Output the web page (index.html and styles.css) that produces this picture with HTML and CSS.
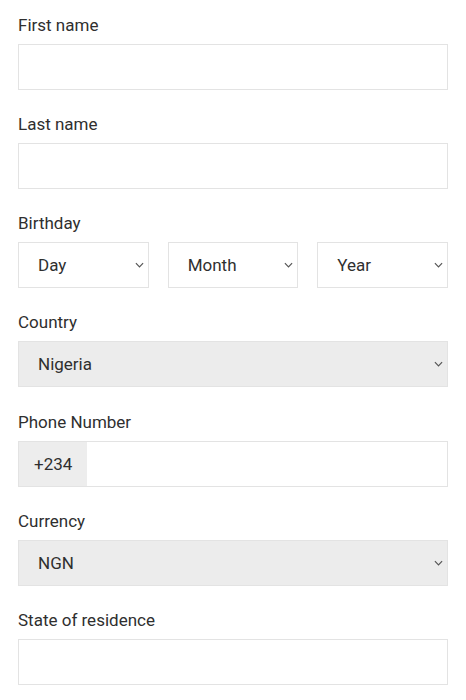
FILE: index.html
```html
<!DOCTYPE html>
<html lang="en">
<head>
    <meta charset="UTF-8">
    <meta name="viewport" content="width=device-width, initial-scale=1.0">
    <title>Register</title>
    <link rel="stylesheet" href="styles.css">
</head>
<body>

<form class="signup">
    <div class="field">
        <label for="first">First name</label>
        <input type="text" id="first" name="first">
    </div>

    <div class="field">
        <label for="last">Last name</label>
        <input type="text" id="last" name="last">
    </div>

    <div class="field">
        <label>Birthday</label>
        <div class="birthday">
            <div class="select-wrap">
                <select name="day"><option>Day</option></select>
                <svg class="chevron" viewBox="0 0 10 6"><path d="M1 1l4 4 4-4"/></svg>
            </div>
            <div class="select-wrap">
                <select name="month"><option>Month</option></select>
                <svg class="chevron" viewBox="0 0 10 6"><path d="M1 1l4 4 4-4"/></svg>
            </div>
            <div class="select-wrap">
                <select name="year"><option>Year</option></select>
                <svg class="chevron" viewBox="0 0 10 6"><path d="M1 1l4 4 4-4"/></svg>
            </div>
        </div>
    </div>

    <div class="field">
        <label for="country">Country</label>
        <div class="select-wrap locked">
            <select id="country" name="country"><option>Nigeria</option></select>
            <svg class="chevron" viewBox="0 0 10 6"><path d="M1 1l4 4 4-4"/></svg>
        </div>
    </div>

    <div class="field">
        <label for="phone">Phone Number</label>
        <div class="phone">
            <span class="prefix">+234</span>
            <input type="tel" id="phone" name="phone">
        </div>
    </div>

    <div class="field">
        <label for="currency">Currency</label>
        <div class="select-wrap locked">
            <select id="currency" name="currency"><option>NGN</option></select>
            <svg class="chevron" viewBox="0 0 10 6"><path d="M1 1l4 4 4-4"/></svg>
        </div>
    </div>

    <div class="field">
        <label for="state">State of residence</label>
        <input type="text" id="state" name="state">
    </div>
</form>

</body>
</html>
```

FILE: styles.css
```css
body {
    margin: 0;
    padding: 15px 18px 0 18px;
    font-family: Roboto, "Liberation Sans", sans-serif;
    color: #2f2f2f;
    background: #fff;
}
.signup {
    display: flex;
    flex-direction: column;
    gap: 24.17px;
}
.field label {
    display: block;
    font-size: 17px;
    line-height: 20px;
    margin-bottom: 9px;
    color: #2f2f2f;
}
.field input,
.field select {
    box-sizing: border-box;
    width: 100%;
    height: 46px;
    border: 1px solid #e3e3e3;
    background: #fff;
    font-family: inherit;
    font-size: 17px;
    color: #2f2f2f;
    outline: none;
    margin: 0;
}
.field input {
    padding: 0 15px;
}
.field select {
    appearance: none;
    -webkit-appearance: none;
    border-radius: 0;
    padding: 0 30px 0 19px;
}
.select-wrap {
    position: relative;
}
.select-wrap.locked select {
    background: #ececec;
}
.chevron {
    position: absolute;
    right: 5px;
    top: 20px;
    width: 9px;
    height: 6px;
    fill: none;
    stroke: #555;
    stroke-width: 1.3;
    pointer-events: none;
}
.birthday {
    display: grid;
    grid-template-columns: repeat(3, 1fr);
    gap: 19px;
}
.phone {
    display: flex;
    height: 46px;
    box-sizing: border-box;
    border: 1px solid #e3e3e3;
}
.phone .prefix {
    display: flex;
    align-items: center;
    padding: 0 15px;
    background: #ededed;
    font-size: 17px;
}
.phone input {
    flex: 1;
    height: 44px;
    border: none;
}
```
